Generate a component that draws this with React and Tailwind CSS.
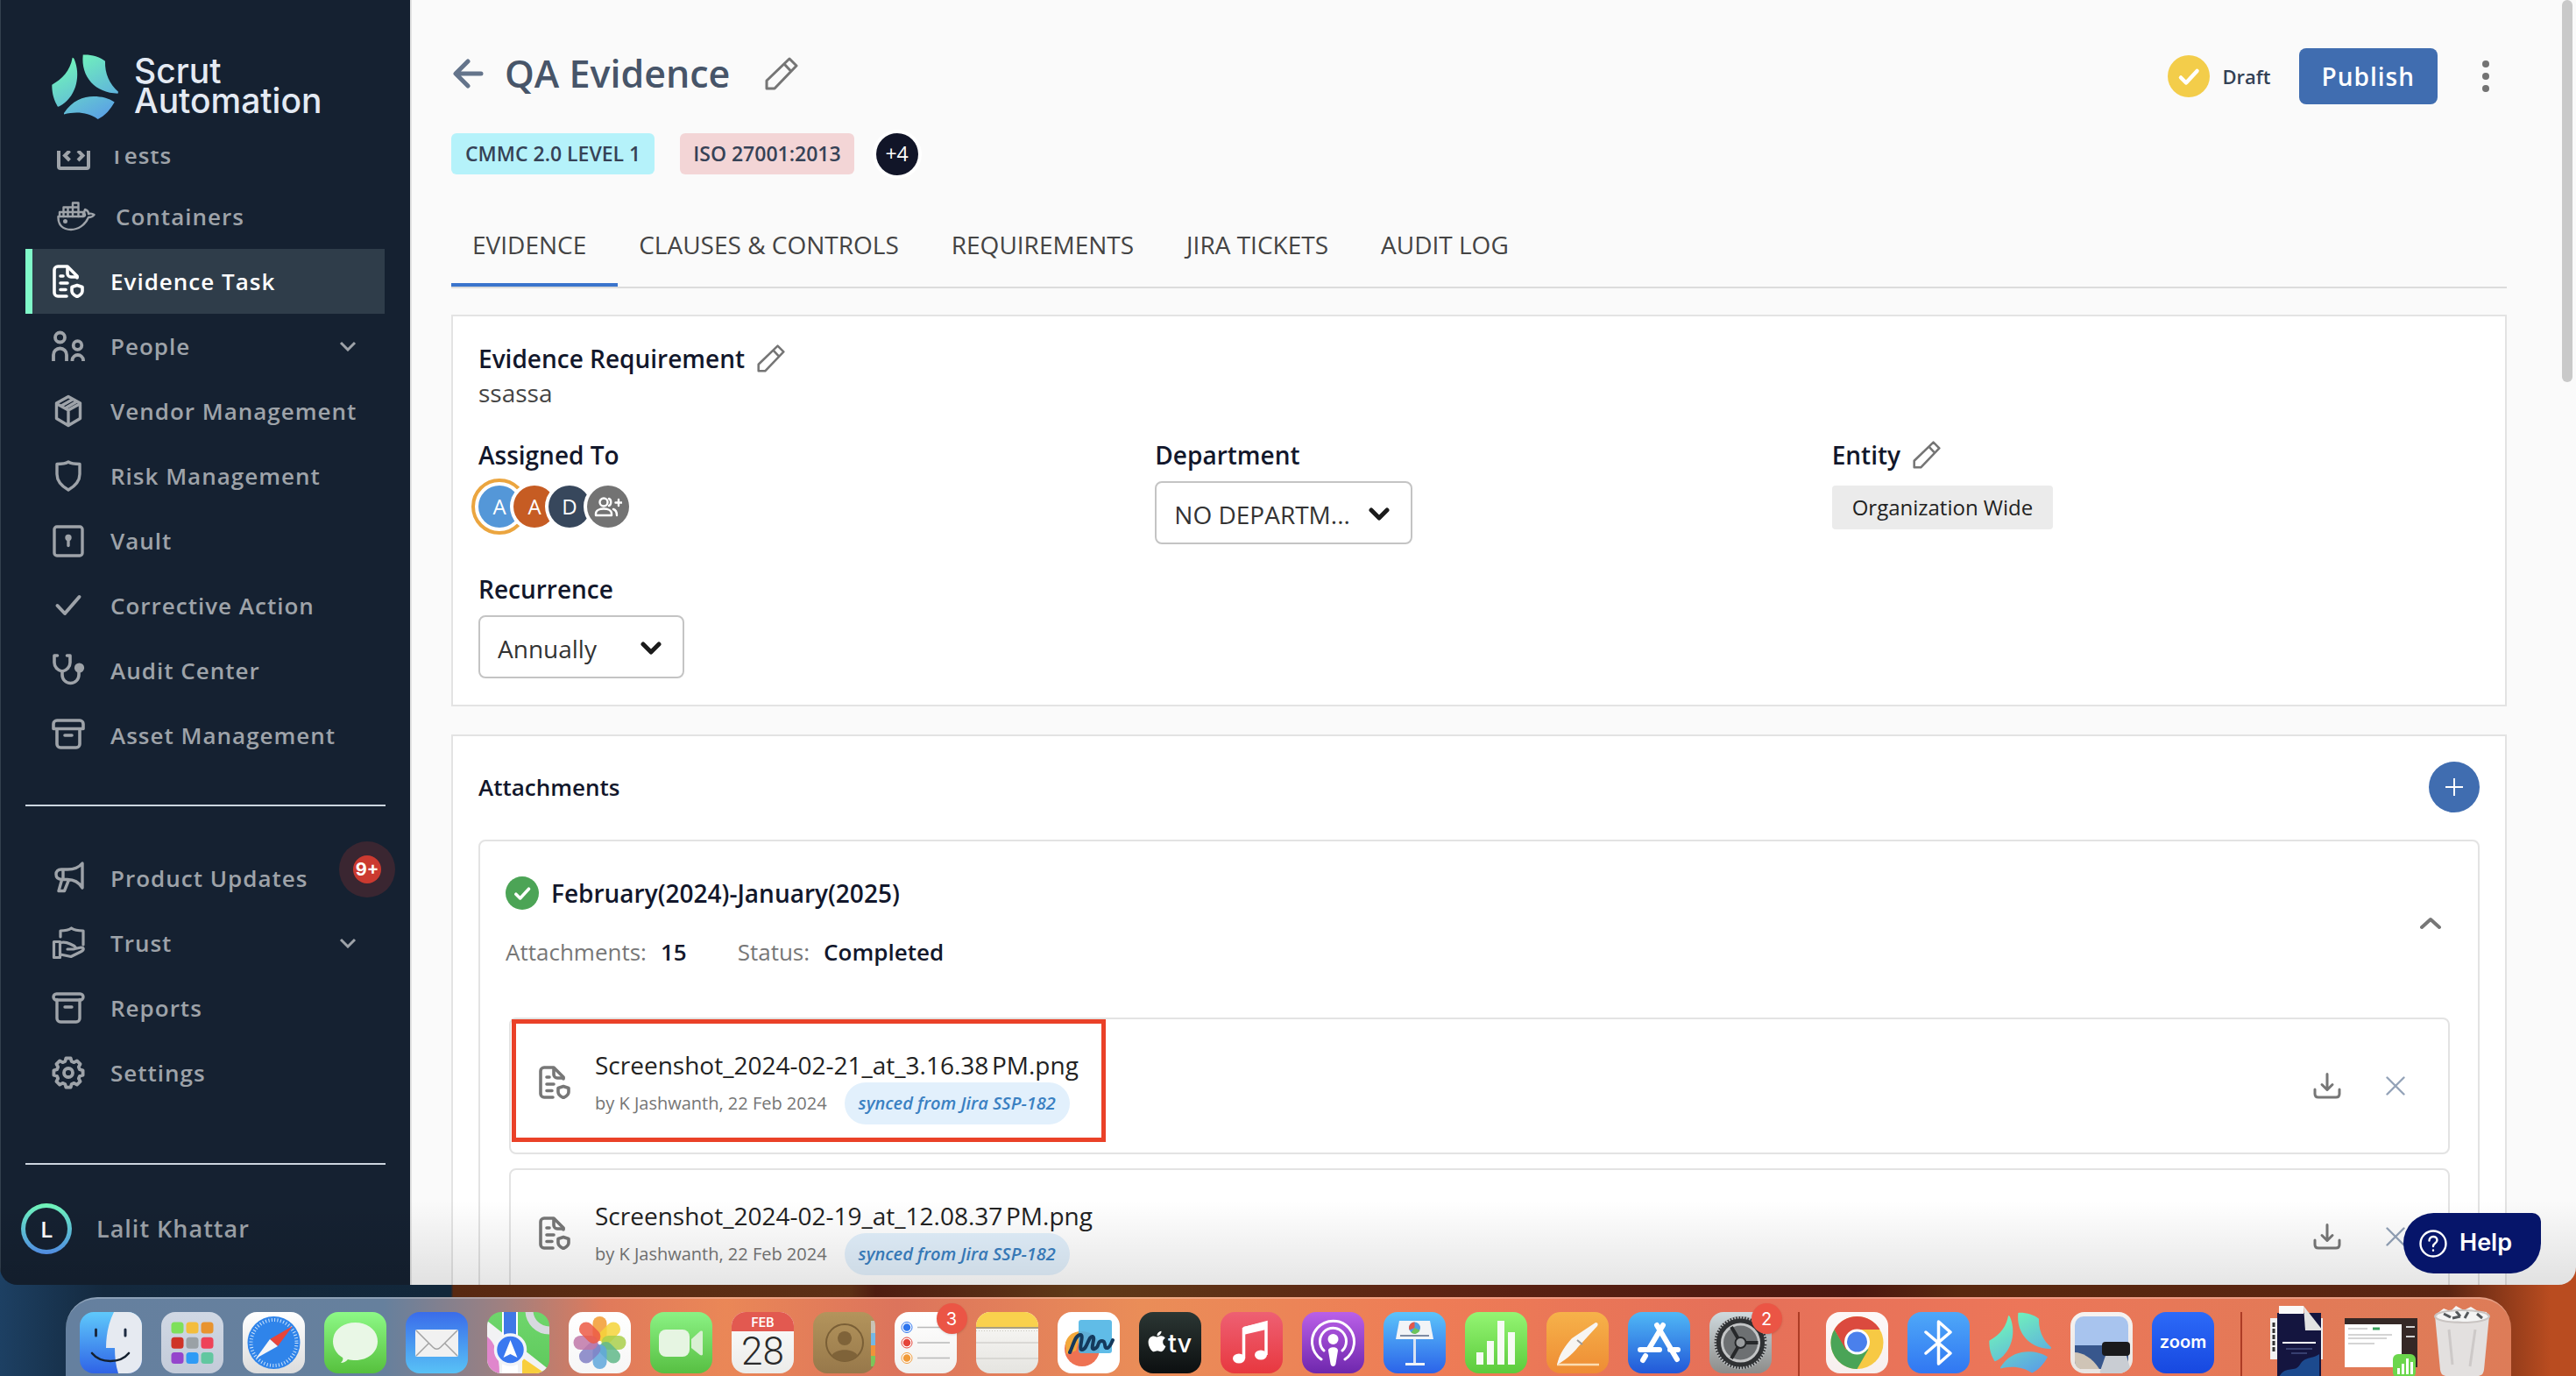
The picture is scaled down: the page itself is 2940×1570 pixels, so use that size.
import { FaApple, FaBluetoothB } from 'react-icons/fa'

// eight-tooth cog outline around (19, 19)
const COG_PATH = Array.from({ length: 8 }, (_, i) => {
  const pt = (deg, r) => {
    const a = ((i * 45 + deg - 90) * Math.PI) / 180
    return `${(19 + r * Math.cos(a)).toFixed(2)} ${(19 + r * Math.sin(a)).toFixed(2)}`
  }
  return `${i ? 'L' : 'M'}${pt(-16, 13.5)}L${pt(-9, 16.8)}L${pt(9, 16.8)}L${pt(16, 13.5)}`
}).join('') + 'Z'

function Glyph({ w = 38, h = 38, sw = 3, className = '', children }) {
  return (
    <svg
      width={w}
      height={h}
      viewBox={`0 0 ${w} ${h}`}
      fill="none"
      stroke="currentColor"
      strokeWidth={sw}
      strokeLinecap="round"
      strokeLinejoin="round"
      className={`shrink-0 ${className}`}
      aria-hidden="true"
    >
      {children}
    </svg>
  )
}

const FileShield = ({ sw = 3.6 }) => (
  <Glyph sw={sw}>
    <path d="M17 36H7a4 4 0 0 1-4-4V6a4 4 0 0 1 4-4h11l11 11v2" />
    <path d="M18 3v7a4 4 0 0 0 4 4h7" />
    <path d="M10 13h3M10 21h8M10 28.5h6" />
    <path d="M29 23.5l6 2v4.5c0 3-2.500 5-6 6.500c-3.500-1.500-6-3.500-6-6.500v-4.500z" />
  </Glyph>
)

const ICONS = {
  tests: (
    <Glyph sw={4}>
      <rect x="2" y="2" width="34" height="32" rx="2" />
      <path d="M14.500 14l-5.500 5.500 5.500 5.500M24 14l5.500 5.500-5.500 5.500" strokeLinecap="butt" strokeLinejoin="miter" />
    </Glyph>
  ),
  docker: (
    <Glyph w={44} h={34} sw={2.4}>
      <path d="M18 6.500V1.500h6.500v5M7.500 12V6.500h17V12M3 17v-5h27v5M12.500 6.500V17M18 6.500V17M24.500 12v5M7.500 12v5" />
      <path d="M1.500 17H29c2 0 3-1 3-2-1-2-1-4 0-6 3 1 4 3 4 5 3-1 5 0 6.500 1-1.500 2-4 3-6.500 3-4 9-12 14-20 14C7 32 1 27 1.500 17z" />
      <circle cx="9.500" cy="22.500" r="1.300" fill="currentColor" />
    </Glyph>
  ),
  evidence: <FileShield />,
  people: (
    <Glyph sw={3.8}>
      <circle cx="9.500" cy="9" r="5.500" />
      <path d="M2 36v-7a7.500 7.500 0 0 1 15 0v7M23.500 36v-1.500a6.300 6.300 0 0 1 12.500 0V36" strokeLinecap="butt" />
      <circle cx="29.500" cy="18" r="4.800" />
    </Glyph>
  ),
  vendor: (
    <Glyph sw={3.4}>
      <path d="M19 2.500l13.500 7.500v17.500L19 35.500 5.500 27.500V10zM5.500 10.500L19 18l13.500-7.500M19 18v17" />
      <path d="M11 13l12.500-7M16 15.500l12-7" />
    </Glyph>
  ),
  risk: (
    <Glyph sw={3.4}>
      <path d="M19 3c-3 2-7 2.500-13 2.500V17c0 9 6 14 13 18 7-4 13-9 13-18V5.500c-6 0-10-.5-13-2.500z" />
    </Glyph>
  ),
  vault: (
    <Glyph sw={3.4}>
      <rect x="3" y="3" width="32" height="33" rx="3" />
      <circle cx="19" cy="15.500" r="2" fill="currentColor" />
      <path d="M19 16v8.500" />
    </Glyph>
  ),
  check: (
    <Glyph sw={4}>
      <path d="M6.500 19l8.500 9L31.500 9" />
    </Glyph>
  ),
  audit: (
    <Glyph sw={3.6}>
      <path d="M6.500 2H3v8c0 5 4 9 9 10 5-1 9-5 9-10V2h-3.500M12 20v4c0 5 4 9.500 9.500 9.500S31 29 31 24v-5" />
      <circle cx="31.500" cy="16" r="3.800" fill="currentColor" />
    </Glyph>
  ),
  asset: (
    <Glyph sw={3.6}>
      <path d="M2 11.500V6a4 4 0 0 1 4-4h26a4 4 0 0 1 4 4v5.500zM6 12v17a4 4 0 0 0 4 4h18a4 4 0 0 0 4-4V12M15 19h8" />
    </Glyph>
  ),
  updates: (
    <Glyph sw={3.4}>
      <path d="M35 2c-4 5-9 7-17 7h-7c-4 0-6 2-6 5.500s2 5.500 6 6h7c8 0 13 3 17 9.500zM13 9v11.500M11.500 21L8 33.500h6.500l5-12.500" />
    </Glyph>
  ),
  trust: (
    <Glyph sw={3.2}>
      <path d="M10 12V5c5 0 9-.5 12.500-3C26 4.500 30 5 36 5v16" />
      <path d="M2.500 17.500h7v18h-7zM10 18.500c5-1 8 0 11 1.500l5 2.500c2 1.500 1 3.500-1 3.500h-7M26.500 25.500l7-1.500c3.500 0 3.500 3 .5 4.500L22 34.500 10 32" />
    </Glyph>
  ),
  reports: (
    <Glyph sw={3.4}>
      <path d="M6 9.500V31a4 4 0 0 0 4 4h18a4 4 0 0 0 4-4V9.500M15 18h8" />
      <rect x="2" y="3" width="34" height="7" rx="3.500" />
    </Glyph>
  ),
  settings: (
    <Glyph sw={3.8}>
      <path d={COG_PATH} />
      <circle cx="19" cy="19" r="5" />
    </Glyph>
  ),
}

const MAIN_NAV = [
  { icon: 'evidence', label: 'Evidence Task', active: true },
  { icon: 'people', label: 'People', expandable: true },
  { icon: 'vendor', label: 'Vendor Management' },
  { icon: 'risk', label: 'Risk Management' },
  { icon: 'vault', label: 'Vault' },
  { icon: 'check', label: 'Corrective Action' },
  { icon: 'audit', label: 'Audit Center' },
  { icon: 'asset', label: 'Asset Management' },
]

const MORE_NAV = [
  { icon: 'updates', label: 'Product Updates', badge: '9+' },
  { icon: 'trust', label: 'Trust', expandable: true },
  { icon: 'reports', label: 'Reports' },
  { icon: 'settings', label: 'Settings' },
]

const FILES = [
  { name: 'Screenshot_2024-02-21_at_3.16.38\u202fPM.png', marked: true },
  { name: 'Screenshot_2024-02-19_at_12.08.37\u202fPM.png' },
]

const TABS = ['EVIDENCE', 'CLAUSES & CONTROLS', 'REQUIREMENTS', 'JIRA TICKETS', 'AUDIT LOG']

function ScrutMark({ id, className }) {
  return (
    <svg viewBox="0 0 76 74" className={className} fill={`url(#${id})`} aria-hidden="true">
      <defs>
        <linearGradient id={id} gradientUnits="userSpaceOnUse" x1="20" y1="0" x2="60" y2="74">
          <stop offset="0" stopColor="#72f8b8" />
          <stop offset="1" stopColor="#5a9fe6" />
        </linearGradient>
      </defs>
      <path d="M23.700 3.700C25.500 3.700 26 6 27 9c6 18 0 41-18.300 50.300Q6.500 60.500 6 58C1.500 50 .3 42 .3 34.700 12 28 21 19 23.700 3.700Z" />
      <path d="M35.700.5C45 0 54 2.500 61 7.700 60.500 22 66 34 76 42.700l-.5 2C50 44 33 26 35.700.5Z" />
      <path d="M14 67c9-14 22-19 34-19 9 0 17 2 23.700 6.500C67 63 61 70 52.700 74 41 66 28 65 14 68.500Z" />
    </svg>
  )
}

function NavItem({ item }) {
  return (
    <li>
      <a
        href="#"
        className={`relative flex h-[74px] items-center gap-[29px] whitespace-nowrap pr-8 ${
          item.active
            ? 'border-l-8 border-[#80f9c9] bg-[#2f3d4a] pl-[22px] text-white'
            : 'pl-[30px]'
        }`}
      >
        {ICONS[item.icon]}
        <span>{item.label}</span>
        {item.expandable && (
          <Glyph w={20} h={12} sw={3} className="ml-auto">
            <path d="M2 2l8 8 8-8" strokeLinecap="butt" strokeLinejoin="miter" />
          </Glyph>
        )}
        {item.badge && (
          <span className="absolute -right-3 -top-[5px] flex h-[64px] w-[64px] items-center justify-center rounded-full bg-[#3a2631]">
            <span className="flex h-8 w-8 items-center justify-center rounded-full bg-[#cb3a30] font-[Inter] text-[20px] font-bold tracking-normal text-white">
              {item.badge}
            </span>
          </span>
        )}
      </a>
    </li>
  )
}

function Sidebar() {
  return (
    <aside className="flex w-[468px] shrink-0 flex-col border-l border-[#33404e] bg-[#152131] text-[26px] font-semibold tracking-[1px] text-[#9ea3a9]">
      <div className="flex h-[172px] shrink-0 gap-[18px] pl-[58px] pt-[62px]">
        <ScrutMark id="brand" className="h-[74px] w-[76px]" />
        <p className="pt-[2px] font-[Inter] text-[39px] font-medium leading-[34px] tracking-normal text-[#e4eaf3]">
          Scrut
          <br />
          Automation
        </p>
      </div>
      <nav className="shrink-0 overflow-hidden pl-7 pr-[29px]">
        <ul className="-mt-7">
          <li>
            <a href="#" className="flex h-[70px] items-center gap-[23px] pb-1 pl-9">
              {ICONS.tests}
              <span>Tests</span>
            </a>
          </li>
          <li>
            <a href="#" className="flex h-[70px] items-center gap-[23px] pb-1 pl-9">
              {ICONS.docker}
              <span>Containers</span>
            </a>
          </li>
          {MAIN_NAV.map((item) => (
            <NavItem key={item.label} item={item} />
          ))}
        </ul>
      </nav>
      <div className="mx-7 mt-[42px] h-[2px] shrink-0 bg-[#ccd5df]" />
      <nav className="mt-[45px] shrink-0 pl-7 pr-[29px]">
        <ul>
          {MORE_NAV.map((item) => (
            <NavItem key={item.label} item={item} />
          ))}
        </ul>
      </nav>
      <div className="mx-7 mt-[66px] h-[2px] shrink-0 bg-[#ccd5df]" />
      <a href="#" className="mt-11 flex items-center gap-7 pl-[23px] text-[27px]">
        <span className="rounded-full bg-linear-to-b from-[#72f8b8] to-[#5794f0] p-[5px]">
          <span className="flex h-12 w-12 items-center justify-center rounded-full bg-[#152131] text-[26px] tracking-normal text-white">
            L
          </span>
        </span>
        <span>Lalit Khattar</span>
      </a>
    </aside>
  )
}

function Pencil({ big }) {
  const size = big ? 'h-[38px] w-[38px]' : 'h-8 w-8'
  return (
    <svg
      viewBox="0 0 38 38"
      className={size}
      fill="none"
      stroke="#757575"
      strokeWidth="3"
      strokeLinejoin="round"
      aria-hidden="true"
    >
      <path d="M2 36v-9L28 2l8 8-25 26zM22.500 8.500l7.500 8" />
    </svg>
  )
}

function CheckBadge({ className, size }) {
  return (
    <svg width={size} height={size} viewBox="0 0 48 48" className={className} aria-hidden="true">
      <circle cx="24" cy="24" r="24" />
      <path
        d="M15 25.500l6 6L33.500 18"
        fill="none"
        stroke="#fff"
        strokeWidth="4.500"
        strokeLinecap="round"
        strokeLinejoin="round"
      />
    </svg>
  )
}

function SelectBox({ id, value, className }) {
  return (
    <div className={`relative mt-[10px] ${className}`}>
      <select
        id={id}
        className="h-[72px] w-full appearance-none rounded-lg border-2 border-[#c4c4c4] bg-white pl-5 pr-16 pt-1 text-[28px] text-[#333]"
      >
        <option>{value}</option>
      </select>
      <span className="pointer-events-none absolute inset-y-0 right-[26px] flex items-center pt-1 text-[#1b1b1b]">
        <Glyph w={24} h={16} sw={5}>
          <path d="M3 3l9 9 9-9" />
        </Glyph>
      </span>
    </div>
  )
}

const fieldLabel = 'flex h-10 items-center gap-[14px] text-[28px] font-semibold text-[#12172b]'

function Avatar({ color, ring, children }) {
  return (
    <span
      className={`relative flex h-12 w-12 items-center justify-center rounded-full text-[24px] text-white ${color} ${
        ring ? 'ring-4 ring-white outline-4 outline-offset-4 outline-[#eba53f]' : 'ring-4 ring-white'
      }`}
    >
      {children}
    </span>
  )
}

function RequirementCard() {
  return (
    <section className="mt-[30px] border-2 border-[#e3e3e3] bg-white pb-[30px] pl-[29px] pt-7">
      <h2 className={fieldLabel}>
        Evidence Requirement
        <button type="button" aria-label="Edit requirement">
          <Pencil />
        </button>
      </h2>
      <p className="text-[28px] leading-[38px] text-[#444]">ssassa</p>
      <div className="mt-8 grid grid-cols-3 gap-x-1 gap-y-[31px]">
        <div>
          <h3 className={fieldLabel}>Assigned To</h3>
          <div className="mt-[15px] flex">
            <Avatar color="bg-[#5497d8]" ring>A</Avatar>
            <span className="-ml-2"><Avatar color="bg-[#c65c23]">A</Avatar></span>
            <span className="-ml-2"><Avatar color="bg-[#37475c]">D</Avatar></span>
            <button type="button" aria-label="Add assignee" className="-ml-1">
              <Avatar color="bg-[#737373]">
                <Glyph w={32} h={24} sw={2.4}>
                  <circle cx="11" cy="7" r="4.500" />
                  <path d="M2 22v-2c0-4 5-5.500 9-5.500s9 1.500 9 5.500v2zM17 3c3 1 3 7 0 8M22 15c3 1 4 3 4 7M28 4v7M24.500 7.500h7" />
                </Glyph>
              </Avatar>
            </button>
          </div>
        </div>
        <div>
          <label htmlFor="department" className={fieldLabel}>Department</label>
          <SelectBox id="department" value="NO DEPARTM..." className="w-[294px]" />
        </div>
        <div>
          <h3 className={fieldLabel}>
            Entity
            <button type="button" aria-label="Edit entity">
              <Pencil />
            </button>
          </h3>
          <span className="mt-[15px] inline-flex h-[50px] items-center rounded bg-[#ebebeb] px-[23px] text-[24px] text-[#222]">
            Organization Wide
          </span>
        </div>
        <div>
          <label htmlFor="recurrence" className={fieldLabel}>Recurrence</label>
          <SelectBox id="recurrence" value="Annually" className="w-[235px]" />
        </div>
      </div>
    </section>
  )
}

function FileRow({ file }) {
  return (
    <li className="relative flex h-[156px] items-center rounded-lg border-2 border-[#e3e3e3] pl-[31px] pr-[49px]">
      {file.marked && (
        <span className="pointer-events-none absolute left-px top-0 h-[140px] w-[678px] border-[5px] border-[#ea4128]" />
      )}
      <span className="pb-2 text-[#777]">
        <FileShield />
      </span>
      <div className="ml-[27px]">
        <p className="text-[28px] leading-10 text-[#222]">{file.name}</p>
        <div className="flex items-center gap-5 text-[20px]">
          <span className="text-[#757575]">by K Jashwanth, 22 Feb 2024</span>
          <span className="flex h-12 items-center rounded-full bg-[#e2f0fc] px-4 font-semibold italic text-[#3a80c2]">
            synced from Jira SSP-182
          </span>
        </div>
      </div>
      <div className="ml-auto flex items-center gap-[51px]">
        <button type="button" aria-label="Download" className="text-[#777]">
          <Glyph w={32} h={30} sw={3}>
            <path d="M16 1.500v18M10 13.500l6 6 6-6M2 19v5c0 2.500 1.500 4 4 4h20c2.500 0 4-1.500 4-4v-5" />
          </Glyph>
        </button>
        <button type="button" aria-label="Remove" className="text-[#94a3b8]">
          <Glyph w={22} h={22} sw={2.4}>
            <path d="M1.500 1.500l19 19M20.500 1.500l-19 19" />
          </Glyph>
        </button>
      </div>
    </li>
  )
}

function AttachmentsCard() {
  return (
    <section className="mt-8 border-2 border-[#e3e3e3] bg-white px-[29px] pt-[29px]">
      <div className="flex items-center justify-between">
        <h2 className="text-[26px] font-semibold text-[#12172b]">Attachments</h2>
        <button
          type="button"
          aria-label="Add attachment"
          className="flex h-[58px] w-[58px] items-center justify-center rounded-full bg-[#406db0] text-white"
        >
          <Glyph w={20} h={20} sw={2}>
            <path d="M10 .5v19M.5 10h19" />
          </Glyph>
        </button>
      </div>
      <div className="mt-[31px] rounded-lg border-2 border-[#e3e3e3] pb-8 pt-10">
        <div className="flex items-center justify-between pl-[29px] pr-[42px]">
          <div>
            <h3 className="flex h-[38px] items-center gap-[14px] text-[28px] font-semibold text-[#12172b]">
              <CheckBadge size={38} className="fill-[#4ca456]" />
              February(2024)-January(2025)
            </h3>
            <p className="mt-7 flex h-10 items-center text-[26px] text-[#777]">
              Attachments:
              <b className="ml-4 mr-[58px] font-semibold text-[#12172b]">15</b>
              Status:
              <b className="ml-4 font-semibold text-[#12172b]">Completed</b>
            </p>
          </div>
          <button type="button" aria-label="Collapse" className="text-[#777]">
            <Glyph w={24} h={16} sw={4}>
              <path d="M2 13L12 4l10 9" />
            </Glyph>
          </button>
        </div>
        <ul className="mt-[55px] flex flex-col gap-4 pl-[33px] pr-8">
          {FILES.map((f) => (
            <FileRow key={f.name} file={f} />
          ))}
        </ul>
      </div>
    </section>
  )
}

function Main() {
  return (
    <main className="min-w-0 flex-1 border-l-2 border-[#e3e3e3] bg-[#fafafa] pl-[45px] pr-[79px] pt-[55px]">
      <header className="flex justify-between">
        <div className="flex h-[58px] items-center">
          <button type="button" aria-label="Back" className="text-[#64748b]">
            <Glyph w={38} h={34} sw={5}>
              <path d="M34 17H6M19 3L5 17l14 14" />
            </Glyph>
          </button>
          <h1 className="ml-[23px] text-[43px] font-semibold text-[#475569]">QA Evidence</h1>
          <button type="button" aria-label="Rename" className="ml-10">
            <Pencil big />
          </button>
        </div>
        <div className="flex h-16 items-center">
          <CheckBadge size={48} className="fill-[#f3cd4a]" />
          <span className="ml-[14px] text-[22px] font-semibold text-[#334155]">Draft</span>
          <button
            type="button"
            className="ml-8 h-16 rounded-lg bg-[#406db0] px-[26px] text-[28px] font-semibold tracking-[1px] text-white"
          >
            Publish
          </button>
          <button type="button" aria-label="More" className="ml-[51px] mr-5 text-[#737373]">
            <svg width="8" height="36" viewBox="0 0 8 36" fill="currentColor">
              <circle cx="4" cy="4" r="4" />
              <circle cx="4" cy="18" r="4" />
              <circle cx="4" cy="32" r="4" />
            </svg>
          </button>
        </div>
      </header>

      <div className="mt-[33px] flex h-[47px] items-center text-[23px] font-semibold text-[#364256]">
        <span className="flex h-full items-center rounded-md bg-[#b5f2fa] px-4">CMMC 2.0 LEVEL 1</span>
        <span className="ml-[29px] flex h-full items-center rounded-md bg-[#f3d5d6] px-[15px]">ISO 27001:2013</span>
        <button
          type="button"
          className="ml-[25px] flex h-12 w-12 items-center justify-center rounded-full bg-[#111528] font-normal text-white ring-4 ring-white"
        >
          +4
        </button>
      </div>

      <div role="tablist" className="mt-8 flex border-b-2 border-[#dcdcdc]">
        {TABS.map((t, i) => (
          <button
            key={t}
            type="button"
            role="tab"
            aria-selected={i === 0}
            className={`h-24 border-b-4 pl-6 pr-9 pt-1 text-[28px] text-[#444] ${
              i === 0 ? 'border-[#3a74cc]' : 'border-transparent'
            }`}
          >
            {t}
          </button>
        ))}
      </div>

      <RequirementCard />
      <AttachmentsCard />
    </main>
  )
}

function Tile({ id, from, to, badge, children }) {
  return (
    <li className="relative h-[70px] w-[71px] shrink-0">
      <svg viewBox="0 0 71 70" className="h-full w-full overflow-visible" aria-hidden="true">
        {from && (
          <>
            <defs>
              <linearGradient id={id} x1="0" y1="0" x2="0" y2="1">
                <stop offset="0" stopColor={from} />
                <stop offset="1" stopColor={to} />
              </linearGradient>
              <clipPath id={`${id}-clip`}>
                <rect width="71" height="70" rx="16" />
              </clipPath>
            </defs>
            <rect width="71" height="70" rx="16" fill={`url(#${id})`} />
          </>
        )}
        <g clipPath={from ? `url(#${id}-clip)` : undefined}>{children}</g>
      </svg>
      {badge && (
        <span className="absolute -right-3 -top-[10px] flex h-[35px] w-[35px] items-center justify-center rounded-full bg-[#eb5545] font-[Inter] text-[20px] text-white shadow">
          {badge}
        </span>
      )}
    </li>
  )
}

const LAUNCHPAD = ['#7ee05a', '#f3bd3c', '#e8942f', '#cf3327', '#9aa1a6', '#ee4358', '#9545cc', '#2f9bf5', '#62c7a0']
const PETALS = ['#f29b30', '#f4d43a', '#a9cf4b', '#62b98a', '#5fa7dc', '#8180c4', '#c077a8', '#ec5a45']

const Separator = () => <li className="mx-2 h-20 w-[2px] self-start bg-[#ac3c25]" />

function Dock() {
  return (
    <footer className="shrink-0 pt-[14px]">
      <ul className="mx-auto flex h-[90px] w-fit items-start gap-[22px] rounded-t-[36px] border-t-2 border-[#ffffff40] bg-[linear-gradient(90deg,#65809f_0%,#66809d_13%,#a1807f_18%,#e07a5b_22%,#ea8757_27%,#dc745c_34%,#ea8d58_44%,#ee7c56_56%,#e57059_68%,#ec7659_80%,#e27a57_92%,#dd7c58_100%)] pl-4 pr-5 pt-[15px]">
        <Tile id="finder" from="#5fc9fb" to="#2f63e6">
          <path d="M39 0C33 12 30 26 30 41h10c0 10 1 20 4 29h27V0z" fill="#e6eaf1" />
          <path d="M18.500 20v7M52 20v7" stroke="#1c2a40" strokeWidth="3" strokeLinecap="round" />
          <path d="M14 47c10 12 32 12 42 0" fill="none" stroke="#14202f" strokeWidth="2.600" strokeLinecap="round" />
        </Tile>
        <Tile id="launchpad" from="#d0d8e4" to="#c3cbd9">
          {LAUNCHPAD.map((c, i) => (
            <rect key={c} x={11.5 + (i % 3) * 17} y={11.5 + Math.floor(i / 3) * 17.3} width="14" height="13" rx="3.500" fill={c} />
          ))}
        </Tile>
        <Tile id="safari" from="#ffffff" to="#dcdcdc">
          <circle cx="35.500" cy="35" r="30" fill="#2f84ea" />
          <circle cx="35.500" cy="35" r="26" fill="none" stroke="#cfe4fb" strokeWidth="4" strokeDasharray="1 2.400" />
          <path d="M57 16L31 31l9 8z" fill="#e8453a" />
          <path d="M15 53l16-22 9 8z" fill="#f5f6f8" />
        </Tile>
        <Tile id="messages" from="#8df986" to="#56c03d">
          <path d="M35.500 12C50 12 61 21 61 33.500S50 55 35.500 55c-3 0-6-.4-8.500-1-2 2.500-5 4-8 4 2-2 3-4 2-6C14 48 10 41 10 33.500 10 21 21 12 35.500 12z" fill="#e9f7e6" />
        </Tile>
        <Tile id="mail" from="#3a6cea" to="#58c2f6">
          <rect x="11" y="20" width="49" height="31" rx="2" fill="#f1f1f1" />
          <path d="M12 21l19 19c3 3 6 3 9 0l19-19M12 50l15-15M59 50L44 35" fill="none" stroke="#a3a3a3" strokeWidth="1.500" />
        </Tile>
        <Tile id="maps" from="#6fd66c" to="#5ec95c">
          <path d="M0 10l71 56v4H0z" fill="#f2f2f4" />
          <path d="M0 28c8 6 14 20 14 42H0z" fill="#e086cc" />
          <path d="M40 71V52l26 18z" fill="#f8ce3d" />
          <path d="M17 0h18v70H17z" fill="#fff" />
          <path d="M19 0h14v40H19z" fill="#3f78e6" />
          <circle cx="71" cy="-2" r="23" fill="none" stroke="#d7d9df" strokeWidth="9" />
          <circle cx="26.500" cy="43" r="17" fill="#3a78f0" stroke="#f2f4f8" strokeWidth="3.500" />
          <path d="M26.500 32l8 20-8-4-8 4z" fill="#fff" />
        </Tile>
        <Tile id="photos" from="#ffffff" to="#f6f6f6">
          {PETALS.map((c, i) => (
            <rect key={c} x="27.500" y="5" width="16" height="28" rx="8" fill={c} fillOpacity=".85" transform={`rotate(${i * 45} 35.500 35)`} />
          ))}
        </Tile>
        <Tile id="facetime" from="#8bf284" to="#57bf42">
          <rect x="10" y="20" width="35" height="31" rx="8" fill="#e6f5e2" />
          <path d="M47 31l10-9c2-1 3 0 3 1v25c0 1-1 2-3 1l-10-8z" fill="#d9efd3" />
        </Tile>
        <Tile id="calendar" from="#fcfcfc" to="#ececea">
          <path d="M0 0h71v22H0z" fill="#e25950" />
          <text x="35.500" y="17" textAnchor="middle" fontSize="14" fontWeight="600" fill="#fff" fontFamily="Inter, sans-serif">FEB</text>
          <text x="35.500" y="60" textAnchor="middle" fontSize="44" fontWeight="300" fill="#2a2a2a" fontFamily="Roboto, sans-serif">28</text>
        </Tile>
        <Tile id="contacts" from="#b3945c" to="#97784a">
          <path d="M66 10h5v14h-5z" fill="#c9c3b5" />
          <path d="M66 24h5v14h-5z" fill="#74b8e6" />
          <path d="M66 38h5v12h-5z" fill="#f0933a" />
          <path d="M66 50h5v12h-5z" fill="#7cc55a" />
          <circle cx="36" cy="35" r="21" fill="none" stroke="#7a5f36" strokeWidth="2" />
          <circle cx="36" cy="30" r="8" fill="#7f6339" />
          <path d="M21 50c4-9 26-9 30 0-8 8-22 8-30 0z" fill="#7f6339" />
        </Tile>
        <Tile id="reminders" from="#ffffff" to="#f1f0ee" badge="3">
          {['#2f76ee', '#e5453a', '#f09a38'].map((c, i) => (
            <g key={c}>
              <circle cx="14" cy={17.5 + i * 17.5} r="5" fill={c} stroke="#fff" strokeWidth="1.500" />
              <circle cx="14" cy={17.5 + i * 17.5} r="6" fill="none" stroke={c} strokeWidth="1" />
              <path d={`M26 ${17.5 + i * 17.5}h37`} stroke="#b9b9b9" strokeWidth="1.500" />
            </g>
          ))}
        </Tile>
        <Tile id="notes" from="#fbfaf8" to="#e5e4e0">
          <path d="M0 0h71v17H0z" fill="#f9d14d" />
          <path d="M0 18h71" stroke="#a99f80" strokeWidth="2" />
          <path d="M0 21.500h71" stroke="#c9c7c0" strokeDasharray="1 2" />
          <path d="M0 35h71M0 53h71" stroke="#d2d1cd" strokeWidth="1.500" />
        </Tile>
        <Tile id="freeform" from="#ffffff" to="#ffffff">
          <circle cx="28" cy="42" r="20" fill="#ee7253" />
          <path d="M9 36c2-10 10-14 18-14l-6 22-11 4z" fill="#f3a93c" />
          <rect x="24" y="9" width="38" height="38" rx="3" fill="#4fb5e4" fillOpacity=".9" />
          <path d="M14 46c4-8 6-20 12-20 5 0-3 17 2 17 6 0 7-16 12-15 4 1-4 16 2 14 7-2 2-9 9-9 5 0 1 9 6 8 3-1 4-5 6-9" fill="none" stroke="#14395c" strokeWidth="4" strokeLinecap="round" />
        </Tile>
        <Tile id="tv" from="#2b3633" to="#0c0f10">
          <FaApple x="7" y="20" size={27} color="#fff" />
          <text x="33" y="46" fontSize="29" fill="#fff" fontFamily="Inter, sans-serif" fontWeight="500">tv</text>
        </Tile>
        <Tile id="music" from="#ee6073" to="#e8383f">
          <path d="M26 19l26-7v37" fill="none" stroke="#fff" strokeWidth="3.500" />
          <path d="M26 17l26-6v9l-26 6z" fill="#fff" />
          <path d="M26.500 18v35" stroke="#fff" strokeWidth="3.500" />
          <ellipse cx="21" cy="53" rx="7" ry="5.500" fill="#fff" />
          <ellipse cx="46" cy="49" rx="7" ry="5.500" fill="#fff" />
        </Tile>
        <Tile id="podcasts" from="#ba60e8" to="#6f27ad">
          <g fill="none" stroke="#fff" strokeWidth="3" strokeLinecap="round">
            <path d="M22 54a24 24 0 1 1 27 0" />
            <path d="M25 44a15 15 0 1 1 21 0" />
          </g>
          <circle cx="35.500" cy="31" r="6" fill="#fff" />
          <path d="M30 44c0-5 11-5 11 0l-2.500 15c-.5 4-5.500 4-6 0z" fill="#fff" />
        </Tile>
        <Tile id="keynote" from="#5cc4fa" to="#2b63e9">
          <path d="M34 30h3v29h-3z" fill="#d8e2f2" />
          <path d="M25 58h22v3H25z" fill="#eef2f8" />
          <path d="M18 10h35l4 21H14z" fill="#f2f4f7" />
          <path d="M19 27h33" stroke="#7d8ba3" strokeWidth="2" />
          <circle cx="35.500" cy="18" r="6.500" fill="#4f9fe3" />
          <path d="M35.500 18v-6.500a6.500 6.500 0 0 0-6 9z" fill="#e4574a" />
          <path d="M35.500 18l6 3a6.500 6.500 0 0 1-10 2.500z" fill="#6cc45c" />
        </Tile>
        <Tile id="numbers" from="#94f573" to="#5ccb3c">
          <path d="M13 46h8v14h-8zM25 33h8v27h-8zM37 10h8v50h-8zM49 23h8v37h-8z" fill="#f6fbf4" />
        </Tile>
        <Tile id="pages" from="#f6b24a" to="#ee8c34">
          <path d="M12 60h48" stroke="#fbdcb2" strokeWidth="2.500" />
          <path d="M12 60c2-10 8-20 17-30L56 12c3 0 3 2 2 4L36 40C28 50 20 56 12 60z" fill="#f7f5f2" />
          <path d="M35 32l6 5" stroke="#9a9a9a" strokeWidth="2" />
        </Tile>
        <Tile id="appstore" from="#50b8f6" to="#2258d8">
          <g stroke="#fff" strokeWidth="6" strokeLinecap="round">
            <path d="M40 15L24 42M33 15l23 39M14 43h22M48 43h9M20 50l-3 5" />
          </g>
        </Tile>
        <Tile id="settings" from="#cfdade" to="#8c8c8a" badge="2">
          <circle cx="35.500" cy="35" r="30" fill="#2f3133" />
          <circle cx="35.500" cy="35" r="29" fill="none" stroke="#b9bcbe" strokeWidth="3" strokeDasharray="1.800 1.600" />
          <circle cx="35.500" cy="35" r="21" fill="#6d7072" stroke="#c3c5c6" strokeWidth="3" />
          <path d="M35.500 35h20M35.500 35L25 17M35.500 35L25 53" stroke="#26282a" strokeWidth="4" />
          <circle cx="35.500" cy="35" r="6" fill="#9b9ea0" stroke="#26282a" strokeWidth="2" />
        </Tile>
        <Separator />
        <Tile id="chrome" from="#fdf8f7" to="#f7efee">
          <circle cx="35.500" cy="35" r="30" fill="#f7c944" />
          <path d="M9.500 20A30 30 0 0 1 61.500 20H35.500L22 43z" fill="#db4a3e" />
          <path d="M9.500 20A30 30 0 0 0 35.500 65l13-22.500-26 0z" fill="#4aa457" />
          <circle cx="35.500" cy="34" r="14.500" fill="#fff" />
          <circle cx="35.500" cy="34" r="11.500" fill="#4a80ec" />
        </Tile>
        <Tile id="bluetooth" from="#4ea8f8" to="#3177f2">
          <path d="M21 23l28 24-13.500 12V11L49 23 21 47" fill="none" stroke="#fff" strokeWidth="3.500" strokeLinecap="round" strokeLinejoin="round" />
        </Tile>
        <li className="h-[70px] w-[71px]">
          <ScrutMark id="brand-dock" className="h-full w-full" />
        </li>
        <Tile id="preview" from="#f6f3f1" to="#e9e4e1">
          <rect x="5" y="5" width="61" height="60" rx="10" fill="#a8c4ee" />
          <path d="M5 38h61v17c0 6-4 10-10 10H15c-6 0-10-4-10-10z" fill="#38578d" />
          <path d="M5 46c8 0 20 6 28 19H12c-5-1-7-5-7-10z" fill="#cfc4b6" />
          <rect x="36" y="34" width="32" height="16" rx="4" fill="#1a1a1c" />
          <path d="M40 50h24l5 17c1 2 0 3-2 3H36c-2 0-3-1-2-3z" fill="#c9cdd3" />
        </Tile>
        <Tile id="zoom" from="#2c6af8" to="#1748e0">
          <text x="35.500" y="41" textAnchor="middle" fontSize="20" fontWeight="600" fill="#fff" fontFamily="Inter, sans-serif">zoom</text>
        </Tile>
        <Separator />
        <Tile>
          <path d="M2 7h60v47H2z" fill="#f2f2f2" />
          <path d="M6 12v34" stroke="#333" strokeWidth="3" strokeDasharray="5 2" />
          <path d="M10 1h50v73H10z" fill="#14153f" />
          <path d="M12-7h28v9H12z" fill="#fafafa" />
          <path d="M40-7l22 28H42z" fill="#e3e3e3" />
          <path d="M16 35h38" stroke="#fff" strokeWidth="2" />
          <path d="M20 42h30M26 47h18" stroke="#5a6aa0" />
          <path d="M12 74c8-14 18-4 24-14s14-6 22-12v26z" fill="#1c4a8e" />
        </Tile>
        <Tile>
          <path d="M-6 7h83v56H-6z" fill="#352826" />
          <path d="M-6 14h65v49H-6z" fill="#fff" />
          <path d="M-2 19h22M-2 26h50M-2 30h44M-2 36h30" stroke="#a9a9a9" />
          <path d="M26 19h8" stroke="#3aa05c" strokeWidth="3" />
          <path d="M64 17h10M64 28h10" stroke="#cfcfcf" strokeWidth="2" />
          <rect x="49" y="48" width="26" height="27" rx="6" fill="#6bd64c" />
          <path d="M54 64h3v7h-3zM59 59h3v12h-3zM64 53h3v18h-3zM69 57h3v14h-3z" fill="#fff" />
        </Tile>
        <Tile>
          <path d="M4 4h62l-6 62c-1 5-3 7-8 7H18c-5 0-7-2-8-7z" fill="#e3e0df" />
          <path d="M20 20l4 40M50 20l-6 42" stroke="#cdc9c8" strokeWidth="3" />
          <path d="M6 2l8-6 8 3 6-6 9 5 8-4 8 5 10 1 1 6-10 5-12 1-12-2-12 1-11-4z" fill="#f4f4f4" />
          <path d="M14 2l8 4M28-1l5 6M42 0l-4 7M52 2l6 5M24 7l9-2" stroke="#55595c" strokeWidth="3" />
          <ellipse cx="35" cy="5" rx="31" ry="7" fill="none" stroke="#c9c4c2" strokeWidth="2" />
        </Tile>
      </ul>
    </footer>
  )
}

export default function App() {
  return (
    <div className="flex h-screen flex-col overflow-hidden bg-[linear-gradient(90deg,#1d4063_0%,#14293e_4%,#12273a_17.500%,#582811_17.600%,#5d3016_33%,#4f1c11_34%,#5f3a18_42%,#5d2413_55%,#4b1710_72%,#59280f_76%,#5a2412_95%,#b94c20_99%)] font-['Open_Sans',sans-serif]">
      <div className="relative flex min-h-0 flex-1 overflow-hidden rounded-b-[20px]">
        <Sidebar />
        <Main />
        <div className="pointer-events-none absolute inset-x-0 bottom-0 h-24 bg-linear-to-b from-transparent to-black/10" />
        <div className="absolute right-1 top-0 h-[436px] w-3 rounded-full bg-[#c9c9c9]" />
        <button
          type="button"
          className="absolute bottom-[13px] right-10 flex h-[69px] w-[157px] items-center gap-[14px] rounded-[35px] rounded-tr-[10px] bg-[#06156a] pl-[18px] font-[Inter] text-[27px] font-semibold text-white"
        >
          <Glyph w={32} h={32} sw={2.4}>
            <circle cx="16" cy="16" r="14.500" />
            <path d="M11.500 12.500c0-6 9-6 9-.5 0 3.500-4.500 3.500-4.500 7M16 23.500v.2" />
          </Glyph>
          Help
        </button>
      </div>
      <Dock />
    </div>
  )
}
